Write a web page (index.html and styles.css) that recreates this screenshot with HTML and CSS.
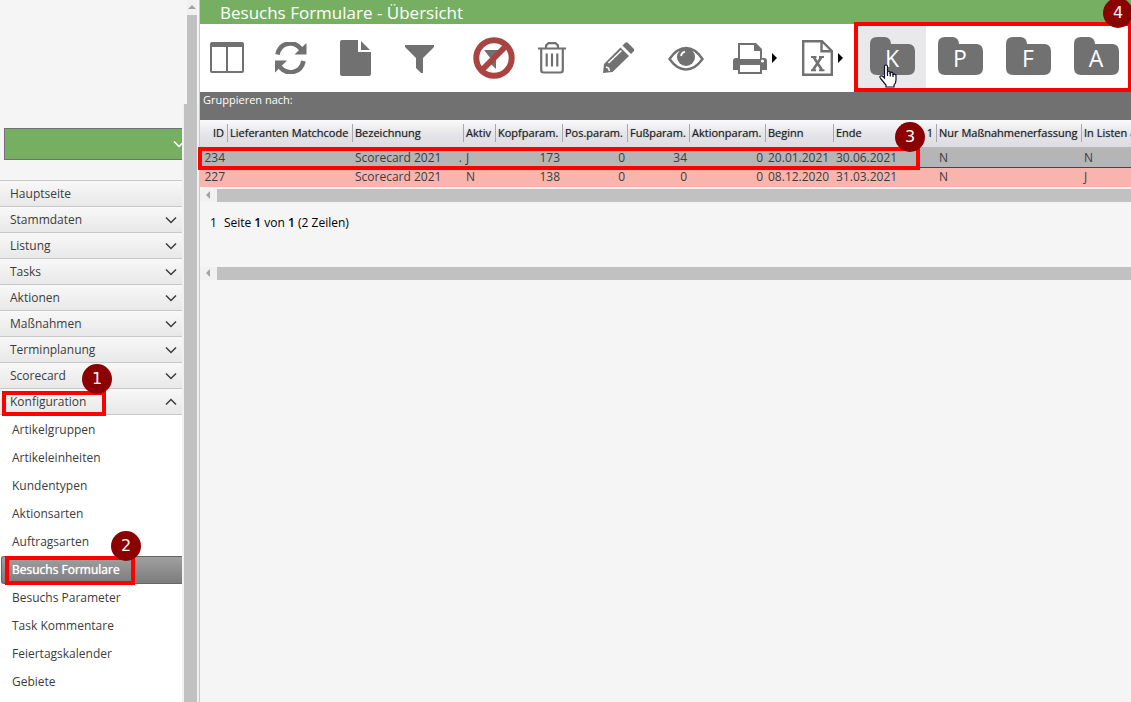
FILE: index.html
```html
<!DOCTYPE html>
<html lang="de">
<head>
<meta charset="utf-8">
<meta name="viewport" content="width=device-width, initial-scale=1">
<title>Besuchs Formulare - Übersicht</title>
<link rel="stylesheet" href="styles.css">
</head>
<body>
<svg class="defs" aria-hidden="true">
  <symbol id="down" viewBox="0 0 12 8"><path d="M1 1.500l5 5 5-5" fill="none" stroke="currentColor" stroke-width="1.500"/></symbol>
  <symbol id="folder" viewBox="0 0 46 38"><path d="M7 0H15Q21 1 21 7H39Q45 8 45 14V31Q45 38 38 38H7Q0 38 0 31V7Q0 0 7 0Z" fill="currentColor"/></symbol>
</svg>
<div class="app">
  <aside class="sidebar">
    <div class="side-top">
      <div class="outer-rail"><span class="arrow-up"></span><span class="thumb"></span></div>
    </div>
    <div class="side-body">
      <nav class="nav" aria-label="Hauptmenü">
        <div class="picker">
          <select class="client" aria-label="Mandant"><option></option></select>
          <svg class="client-chevron" aria-hidden="true"><use href="#down"/></svg>
        </div>
        <ul class="menu">
          <li><a class="group" href="#">Hauptseite</a></li>
          <li><a class="group" href="#">Stammdaten<svg class="chevron"><use href="#down"/></svg></a></li>
          <li><a class="group" href="#">Listung<svg class="chevron"><use href="#down"/></svg></a></li>
          <li><a class="group" href="#">Tasks<svg class="chevron"><use href="#down"/></svg></a></li>
          <li><a class="group" href="#">Aktionen<svg class="chevron"><use href="#down"/></svg></a></li>
          <li><a class="group" href="#">Maßnahmen<svg class="chevron"><use href="#down"/></svg></a></li>
          <li><a class="group" href="#">Terminplanung<svg class="chevron"><use href="#down"/></svg></a></li>
          <li><a class="group" href="#">Scorecard<svg class="chevron"><use href="#down"/></svg></a></li>
          <li class="marked">
            <a class="group" href="#">Konfiguration<svg class="chevron open"><use href="#down"/></svg></a>
            <span class="frame frame-1"></span><span class="badge badge-1">1</span>
            <ul class="submenu">
              <li><a class="item" href="#">Artikelgruppen</a></li>
              <li><a class="item" href="#">Artikeleinheiten</a></li>
              <li><a class="item" href="#">Kundentypen</a></li>
              <li><a class="item" href="#">Aktionsarten</a></li>
              <li><a class="item" href="#">Auftragsarten</a></li>
              <li class="marked">
                <a class="item selected" href="#" aria-current="page">Besuchs Formulare</a>
                <span class="frame frame-2"></span><span class="badge badge-2">2</span>
              </li>
              <li><a class="item" href="#">Besuchs Parameter</a></li>
              <li><a class="item" href="#">Task Kommentare</a></li>
              <li><a class="item" href="#">Feiertagskalender</a></li>
              <li><a class="item" href="#">Gebiete</a></li>
            </ul>
          </li>
        </ul>
      </nav>
      <div class="inner-rail"></div>
    </div>
  </aside>

  <main class="main">
    <h1 class="title">Besuchs Formulare - Übersicht</h1>
    <div class="toolbar">
      <button class="tool" aria-label="Spalten"><svg width="34" height="32" viewBox="0 0 34 32"><path fill="currentColor" fill-rule="evenodd" d="M2 0H32Q34 0 34 2V29Q34 31 32 31H2Q0 31 0 29V2Q0 0 2 0ZM2 5V29H16V5ZM18 5V29H32V5Z"/></svg></button>
      <button class="tool" aria-label="Aktualisieren"><svg width="32" height="32" viewBox="0 0 32 32"><g fill="none" stroke="currentColor" stroke-width="4.6"><path d="M2.500 12.500C5 0 19-2 26 7"/><path d="M28.500 19C26 31.500 12 33.500 5 25"/></g><path fill="currentColor" d="M31.500 1V12.500H19.500L23 9ZM0 30.500V18.500H12L8 22.500Z"/></svg></button>
      <button class="tool" aria-label="Neu"><svg width="31" height="36" viewBox="0 0 31 36"><path fill="currentColor" d="M2 0H18V12H31V34Q31 36 29 36H2Q0 36 0 34V2Q0 0 2 0ZM21 1L30 10H21Z"/></svg></button>
      <button class="tool" aria-label="Filter"><svg width="29" height="30" viewBox="0 0 29 30"><path fill="currentColor" d="M0 2H29V4L18 15V30H16L11 25V15L0 4Z"/></svg></button>
      <button class="tool" aria-label="Filter aufheben"><svg width="42" height="42" viewBox="0 0 42 42"><path fill="currentColor" d="M11 13H31L23 22V32L18 27V22Z"/><circle cx="21" cy="21" r="17.700" fill="none" stroke="#a94442" stroke-width="6"/><path d="M8.500 33.500L33.500 8.500" stroke="#a94442" stroke-width="6"/></svg></button>
      <button class="tool" aria-label="Löschen"><svg width="28" height="32" viewBox="0 0 28 32"><g fill="none" stroke="currentColor" stroke-width="2.200"><path d="M0 6.500H28M8 6V3.500L10.500 1.200H17.500L20 3.500V6M3.200 7V28Q3.200 30.500 5.500 30.500H22.500Q24.800 30.500 24.800 28V7"/><path d="M8.700 11.500V24.500M14 11.500V24.500M19.300 11.500V24.500"/></g></svg></button>
      <button class="tool" aria-label="Bearbeiten"><svg width="32" height="32" viewBox="0 0 32 32"><path fill="currentColor" d="M0 31L1 22L17.500 5.500L26 14L9.500 30ZM19.500 3.500L22 1Q23.500-.5 25 1L30.500 6.500Q32 8 30.500 9.500L28 12Z"/><path d="M5.500 21L18.500 8.500M3 25L5.500 26L6.500 29" fill="none" stroke="#fff" stroke-width="1.500"/></svg></button>
      <button class="tool" aria-label="Ansehen"><svg width="36" height="26" viewBox="0 0 36 26"><path d="M1.500 14Q9 3 18 3T34.500 14Q27 24.500 18 24.500T1.500 14Z" fill="none" stroke="currentColor" stroke-width="2.400"/><circle cx="18" cy="12" r="9" fill="currentColor"/><path d="M13 11Q13.500 7.500 17 6.700" fill="none" stroke="#fff" stroke-width="1.800"/></svg></button>
      <button class="tool" aria-label="Drucken"><svg width="34" height="32" viewBox="0 0 34 32"><path fill="currentColor" fill-rule="evenodd" d="M5 1H23L29 7V16H31Q34 16 34 19V28H29V32H5V28H0V19Q0 16 3 16H5ZM7 3V17H27V9H21V3ZM7 23V30H27V23ZM29.500 17.500A1.500 1.500 0 1 0 29.500 20.500A1.500 1.500 0 1 0 29.500 17.500Z"/></svg><svg class="more" viewBox="0 0 5 10"><path d="M0 0L5 5L0 10Z"/></svg></button>
      <button class="tool" aria-label="Excel-Export"><svg width="31" height="36" viewBox="0 0 31 36"><path d="M1.200 1.200H20L29.800 11V34.800H1.200ZM19.500 1.500V11.200H29.500" fill="none" stroke="currentColor" stroke-width="2.400"/><path d="M11.500 17L20 30M19.500 17L11 30" stroke="currentColor" stroke-width="2.600"/><path d="M9 17H14.500M17 17H22M9 30.200H14M17 30.200H22.500" stroke="currentColor" stroke-width="2"/></svg><svg class="more" viewBox="0 0 5 10"><path d="M0 0L5 5L0 10Z"/></svg></button>
      <div class="folders">
        <button class="folder hover"><svg><use href="#folder"/></svg><span>K</span></button>
        <button class="folder"><svg><use href="#folder"/></svg><span>P</span></button>
        <button class="folder"><svg><use href="#folder"/></svg><span>F</span></button>
        <button class="folder"><svg><use href="#folder"/></svg><span>A</span></button>
        <svg class="cursor" viewBox="0 0 18 24"><path d="M5.500 14V2.500Q5.500 1 7 1T8.500 2.500V8Q9.500 6.500 11 8V9Q12.500 7.500 14 9V10.500Q15.500 9.500 17 11V16Q17 19 15 21V23H7V21L2 15Q0 12.500 1.500 12T4 12.500Z" fill="#fff" stroke="#11112a" stroke-width="1.200"/><path d="M8.500 8V12M11.300 9V12.500M14 10V13" stroke="#11112a" stroke-width="1.200"/></svg>
        <span class="frame frame-4"></span><span class="badge badge-4">4</span>
      </div>
    </div>
    <div class="grouping">Gruppieren nach:</div>

    <div class="grid-area">
      <table class="grid">
        <colgroup><col class="c-id"><col class="c-match"><col class="c-name"><col class="c-active"><col class="c-head"><col class="c-pos"><col class="c-foot"><col class="c-action"><col class="c-date"><col class="c-date"><col class="c-one"><col class="c-only"><col></colgroup>
        <thead>
          <tr><th class="num">ID</th><th>Lieferanten Matchcode</th><th>Bezeichnung</th><th>Aktiv</th><th>Kopfparam.</th><th>Pos.param.</th><th>Fußparam.</th><th>Aktionparam.</th><th>Beginn</th><th>Ende</th><th class="num">1</th><th>Nur Maßnahmenerfassung</th><th>In Listen a</th></tr>
        </thead>
        <tbody>
          <tr class="current"><td class="num">234</td><td></td><td><span class="name">Scorecard 2021<span>.</span></span></td><td>J</td><td class="num">173</td><td class="num">0</td><td class="num">34</td><td class="num">0</td><td>20.01.2021</td><td>30.06.2021</td><td></td><td>N</td><td>N</td></tr>
          <tr class="expired"><td class="num">227</td><td></td><td>Scorecard 2021</td><td>N</td><td class="num">138</td><td class="num">0</td><td class="num">0</td><td class="num">0</td><td>08.12.2020</td><td>31.03.2021</td><td></td><td>N</td><td>J</td></tr>
        </tbody>
      </table>
      <span class="frame frame-3"></span><span class="badge badge-3">3</span>
    </div>
    <div class="h-rail"><span class="arrow-left"></span><span class="thumb"></span></div>
    <div class="pager"><span>1</span><span>Seite <b>1</b> von <b>1</b> (2 Zeilen)</span></div>
    <div class="h-rail"><span class="arrow-left"></span><span class="thumb"></span></div>
  </main>
</div>
</body>
</html>
```
FILE: styles.css
```css
* { box-sizing: border-box; }

body {
  margin: 0;
  overflow: hidden;
  background: #f5f5f5;
  color: #3c3c3c;
  font: 12px/18px "Open Sans", "Noto Sans", sans-serif;
}

ul { list-style: none; margin: 0; padding: 0; }
a { color: inherit; text-decoration: none; }
button { border: 0; background: none; font: inherit; color: inherit; padding: 0; }
svg { display: block; }
.defs { position: absolute; width: 0; height: 0; }

.app { display: flex; height: 100vh; }

/* Sidebar */
.sidebar {
  flex: none;
  width: 200px;
  display: flex;
  flex-direction: column;
  background: #f1f1f1;
  border-right: 1px solid #c8c8c8;
}
.side-top {
  flex: none;
  height: 104px;
  display: flex;
  justify-content: flex-end;
  padding-right: 2px;
  background: #f5f5f5;
}
.outer-rail {
  width: 10px;
  display: flex;
  flex-direction: column;
  align-items: center;
  gap: 6px;
  padding-top: 5px;
  background: #f1f1f1;
}
.outer-rail .thumb { flex: 1; width: 10px; background: #c1c1c1; }
.arrow-up {
  border: 4px solid transparent;
  border-top: 0;
  border-bottom-color: #a3a3a3;
}
.side-body { flex: 1; min-height: 0; display: flex; }
.nav { flex: none; width: 182px; background: #fff; }
.inner-rail { width: 13px; margin-left: 2px; background: #c1c1c1; }

.picker {
  position: relative;
  padding: 24px 0 20px 4px;
  background: #f5f5f5;
  overflow: hidden;
}
.client {
  display: block;
  width: 100%;
  height: 32px;
  appearance: none;
  border: 1px solid #717171;
  border-right: 0;
  border-radius: 0;
  background: #76af62;
}
.client-chevron {
  position: absolute;
  right: -3px;
  top: 36px;
  width: 12px;
  height: 8px;
  color: #fff;
}

.group {
  display: flex;
  align-items: center;
  justify-content: space-between;
  height: 26px;
  padding: 0 5px 0 10px;
  border-top: 1px solid #c8c8c8;
  background: linear-gradient(#f8f8f8, #e8e8e8);
}
.chevron { width: 12px; height: 8px; }
.chevron.open { transform: scaleY(-1); }
.submenu { padding-top: 1px; border-top: 1px solid #c8c8c8; }
.item {
  display: flex;
  align-items: center;
  height: 28px;
  padding-left: 12px;
}
.item.selected {
  margin-left: 1px;
  padding-left: 10px;
  border: 1px solid #666;
  border-width: 1px 0 1px 1px;
  border-radius: 3px 0 0 3px;
  background: linear-gradient(#a0a0a0, #7c7c7c);
  color: #fff;
  text-shadow: 0 0 1px #fff;
}
.marked { position: relative; }

/* Callouts */
.frame { position: absolute; border: 4px solid #f00; pointer-events: none; }
.badge {
  position: absolute;
  z-index: 1;
  width: 30px;
  height: 30px;
  border-radius: 50%;
  background: #8b0000;
  color: #fff;
  font: 16px/30px "DejaVu Sans", sans-serif;
  text-align: center;
}
.frame-1 { left: 2px; top: 3px; width: 104px; height: 25px; }
.badge-1 { left: 82px; top: -24px; }
.frame-2 { left: 5px; top: 0; width: 130px; height: 29px; }
.badge-2 { left: 111px; top: -25px; }
.frame-3 { left: -2px; top: 27px; width: 722px; height: 23px; }
.badge-3 { left: 695px; top: 2px; }
.frame-4 { left: -4px; top: -2px; right: -1px; bottom: 0; }
.badge-4 { right: -2px; top: -26px; }

/* Main */
.main { flex: 1; min-width: 0; }
.title {
  margin: 0;
  padding: 1px 0 0 20px;
  background: #76af62;
  color: #fff;
  font-size: 17px;
  font-weight: 400;
  line-height: 23px;
}
.toolbar {
  display: grid;
  height: 68px;
  grid-template-columns: 65px 65px 65px 68px 65px 65px 65px 65px 69px 56px minmax(273px, 1fr);
  padding-left: 10px;
  background: #fff;
  color: #717171;
}
.tool { display: flex; align-items: center; gap: 5px; }
.more { width: 5px; height: 10px; fill: #000; }
.folders { position: relative; display: flex; }
.folder {
  position: relative;
  width: 68px;
  display: flex;
  align-items: center;
  justify-content: center;
  padding: 0 0 4px 1px;
}
.folder.hover { background: #e9e9eb; }
.folder svg { width: 46px; height: 38px; }
.folder span {
  position: absolute;
  inset: 0;
  color: #fff;
  font-size: 23px;
  line-height: 68px;
}
.cursor { position: absolute; left: 21px; top: 40px; width: 18px; height: 24px; }
.grouping {
  height: 28px;
  padding-left: 3px;
  background: #717171;
  color: #fff;
  font-size: 11px;
  line-height: 16px;
}

/* Grid */
.grid-area { position: relative; }
.grid {
  width: 100%;
  table-layout: fixed;
  border-collapse: collapse;
  white-space: nowrap;
}
.c-id { width: 28px; }
.c-match { width: 125px; }
.c-name { width: 111px; }
.c-active { width: 32px; }
.c-head { width: 67px; }
.c-pos { width: 65px; }
.c-foot { width: 62px; }
.c-action { width: 76px; }
.c-date { width: 68px; }
.c-one { width: 35px; }
.c-only { width: 145px; }
.grid th {
  height: 28px;
  padding: 0 2px 1px;
  border-bottom: 2px solid #b8b8bc;
  background:
    linear-gradient(#a8a8ac, #a8a8ac) right 4px / 1px 18px no-repeat,
    linear-gradient(#fafafa, #e4e4e9 55%, #dcdce2);
  color: #222;
  font-size: 11px;
  font-weight: 400;
  text-align: left;
  text-shadow: 0 0 1px #777;
}
.grid th.num { padding-right: 4px; }
.grid th:last-child { background: linear-gradient(#fafafa, #e4e4e9 55%, #dcdce2); }
.grid td { height: 19px; padding: 0 2px; }
.grid .num { text-align: right; }
.grid td.num { padding-right: 3px; }
.name { display: flex; justify-content: space-between; }
.current { background: #b5b5b5; border-bottom: 1px solid #40406a; }
.expired { background: #fab4ae; }

.h-rail {
  display: flex;
  align-items: center;
  gap: 7px;
  height: 13px;
  padding-left: 6px;
  background: #f1f1f1;
}
.grid-area + .h-rail { margin-top: 2px; }
.h-rail .thumb { flex: 1; height: 13px; background: #c1c1c1; }
.arrow-left { border: 4px solid transparent; border-left: 0; border-right-color: #a3a3a3; }
.pager {
  display: flex;
  gap: 7px;
  height: 65px;
  padding: 12px 10px;
  color: #000;
}
.pager b { font-weight: 600; }
```
